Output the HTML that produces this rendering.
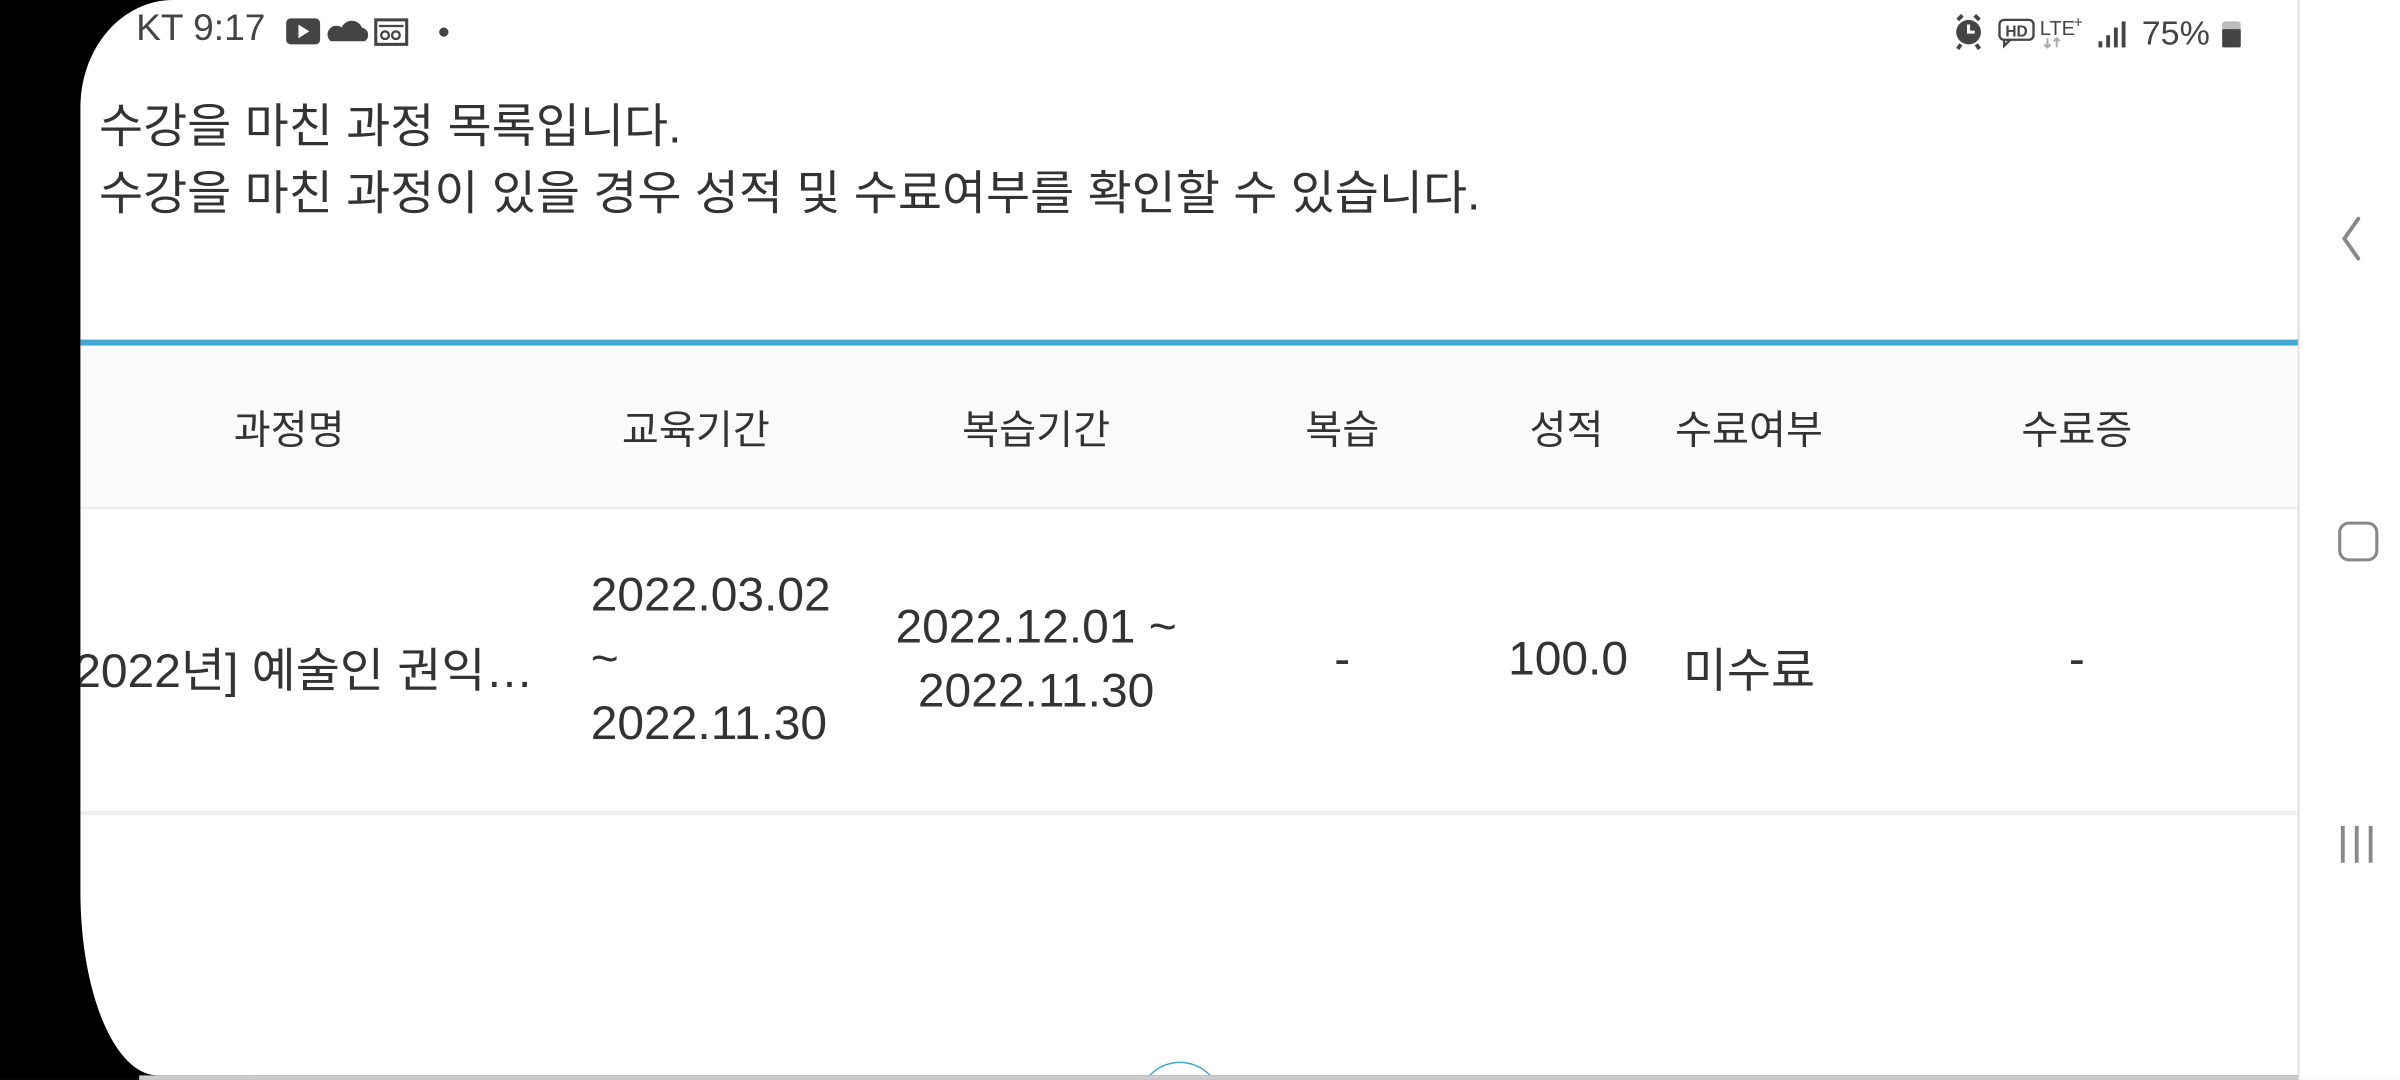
<!DOCTYPE html>
<html><head><meta charset="utf-8"><style>
html,body{margin:0;padding:0;width:2400px;height:1080px;overflow:hidden;background:#fff}
#s{position:absolute;left:0;top:0;width:1552px;height:706px;overflow:hidden;transform-origin:0 0;transform:scale(1.5464,1.5297);font-family:"Liberation Sans","Noto Sans CJK KR",sans-serif;color:#333;background:#000}
.panel{position:absolute;left:52px;top:0;width:1434px;height:703px;background:#fff;border-top-left-radius:60px 70px;border-bottom-left-radius:50px 120px;overflow:hidden}
.nav{position:absolute;left:1486px;top:0;width:66px;height:706px;background:#fff;border-left:1.5px solid #ddd}
.bot{position:absolute;left:90px;top:703px;width:1396px;height:3px;background:#ccc}
.t{position:absolute;white-space:nowrap}
.h{position:absolute;top:261px;font-size:26px;transform:translateX(-50%);white-space:nowrap;color:#333}
.c{position:absolute;font-size:31px;transform:translateX(-50%);white-space:nowrap;color:#333}
</style></head><body><div id="s">
<div class="panel">
  <div class="t" style="left:36px;top:5px;font-size:24px;color:#444">KT 9:17</div>
  <svg style="position:absolute;left:133px;top:11px" width="110" height="20">
    <rect x="0" y="1" width="22" height="17" rx="3" fill="#444"/><path d="M8 5 L15 9.5 L8 14Z" fill="#fff"/>
    <path d="M29 16 h22 a5 5 0 0 0 -2 -9 a7 7 0 0 0 -13 0 a5 5 0 0 0 -7 9z" fill="#444"/>
    <rect x="58" y="2" width="20" height="16" fill="none" stroke="#444" stroke-width="2"/><circle cx="64" cy="12" r="2.5" fill="none" stroke="#444" stroke-width="1.5"/><circle cx="71" cy="12" r="2.5" fill="none" stroke="#444" stroke-width="1.5"/><line x1="60" y1="6" x2="76" y2="6" stroke="#444" stroke-width="1.5"/>
    <circle cx="102" cy="10" r="3" fill="#444"/>
  </svg>
  <div class="t" style="left:12px;top:57px;font-size:31px">수강을 마친 과정 목록입니다.</div>
  <div class="t" style="left:12px;top:101px;font-size:31px">수강을 마친 과정이 있을 경우 성적 및 수료여부를 확인할 수 있습니다.</div>
  <div style="position:absolute;left:0;top:222px;width:1434px;height:4px;background:#43a9d3"></div>
  <div style="position:absolute;left:0;top:226px;width:1434px;height:105px;background:#fafafa;border-bottom:2px solid #eee"></div>
  <div class="h" style="left:135px">과정명</div>
  <div class="h" style="left:398px">교육기간</div>
  <div class="h" style="left:618px">복습기간</div>
  <div class="h" style="left:816px">복습</div>
  <div class="h" style="left:961px">성적</div>
  <div class="h" style="left:1079px">수료여부</div>
  <div class="h" style="left:1291px">수료증</div>
  <div class="t" style="left:-4px;top:413px;font-size:31px">2022년] 예술인 권익…</div>
  <div class="t" style="left:330px;top:371px;font-size:31px">2022.03.02</div>
  <div class="t" style="left:330px;top:413px;font-size:31px">~</div>
  <div class="t" style="left:330px;top:455px;font-size:31px">2022.11.30</div>
  <div class="c" style="left:618px;top:392px">2022.12.01 ~</div>
  <div class="c" style="left:618px;top:434px">2022.11.30</div>
  <div class="c" style="left:816px;top:413px">-</div>
  <div class="c" style="left:962px;top:413px">100.0</div>
  <div class="c" style="left:1079px;top:413px">미수료</div>
  <div class="c" style="left:1291px;top:413px">-</div>
  <div style="position:absolute;left:0;top:530px;width:1434px;height:3px;background:#f0f0f0"></div>
  <div style="position:absolute;left:684px;top:694px;width:54px;height:54px;border:1.5px solid #43a9d3;border-radius:50%;box-sizing:border-box"></div>
</div>
<div class="bot"></div>
<div class="nav">
  <svg style="position:absolute;left:24px;top:140px" width="20" height="32"><path d="M14 3 L5 16 L14 29" fill="none" stroke="#888" stroke-width="2.5" stroke-linecap="round"/></svg>
  <div style="position:absolute;left:25px;top:341px;width:26px;height:26px;border:2.5px solid #888;border-radius:7px;box-sizing:border-box"></div>
  <svg style="position:absolute;left:24px;top:538px" width="28" height="28"><path d="M4 2V26M13 2V26M22 2V26" stroke="#888" stroke-width="2.5"/></svg>
</div>
<svg style="position:absolute;left:1262px;top:8px" width="200" height="26">
  <circle cx="11" cy="13" r="8" fill="#444"/><path d="M4 5 l3 -3 M18 5 l-3 -3 M6 21 l-2 3 M16 21 l2 3" stroke="#444" stroke-width="2.5"/><path d="M11 8 v5 h4" stroke="#fff" stroke-width="2" fill="none"/>
  <rect x="31" y="5" width="22" height="13" rx="3" fill="none" stroke="#444" stroke-width="1.5"/><path d="M34 18 l0 4 4 -4" fill="none" stroke="#444" stroke-width="1.5"/>
  <text x="42" y="16" font-size="10" font-weight="bold" text-anchor="middle" fill="#444" font-family="Liberation Sans">HD</text>
  <text x="57" y="15" font-size="13" fill="#444" font-family="Liberation Sans">LTE</text><text x="79" y="10" font-size="10" fill="#444" font-family="Liberation Sans">+</text>
  <path d="M62 17 v6 M60 21 l2 2 2-2 M68 23 v-6 M66 19 l2-2 2 2" stroke="#aaa" stroke-width="1.3" fill="none"/>
  <rect x="95" y="19" width="2.5" height="4" fill="#444"/><rect x="100" y="15" width="2.5" height="8" fill="#444"/><rect x="105" y="10" width="2.5" height="13" fill="#444"/><rect x="110" y="6" width="2.5" height="17" fill="#444"/>
  <text x="123" y="21" font-size="22" fill="#444" font-family="Liberation Sans">75%</text>
  <rect x="175" y="6" width="12" height="17" rx="2" fill="#bbb"/><rect x="175" y="11" width="12" height="12" rx="1" fill="#444"/>
</svg>
</div></body></html>
